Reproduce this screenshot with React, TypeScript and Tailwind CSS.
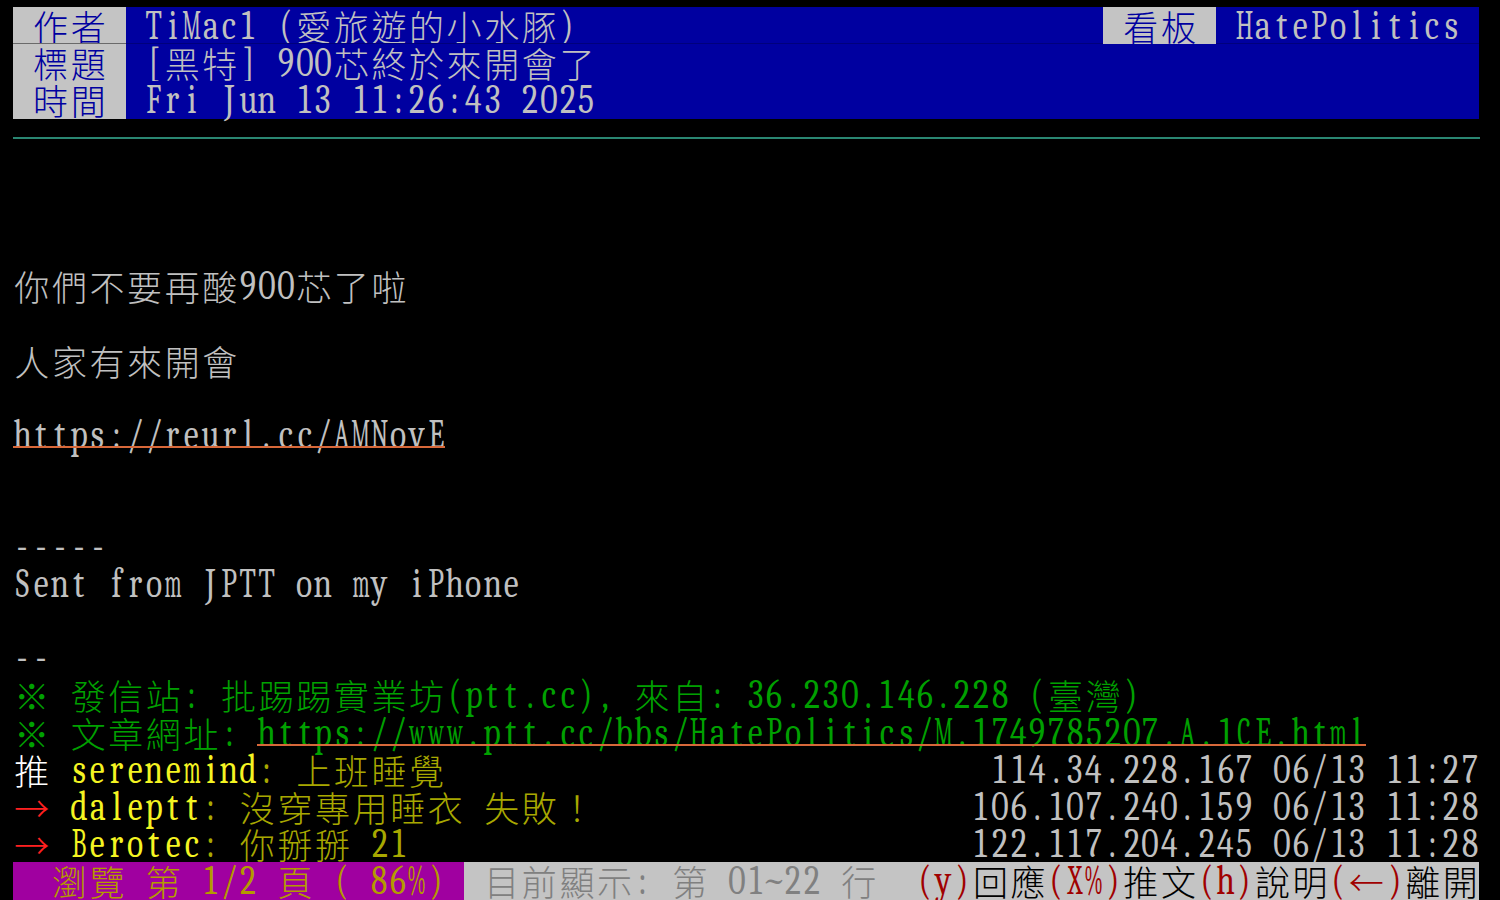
import React from "react";

type Seg = { t: string; fg?: string; bg?: string; u?: boolean; to?: number; line?: string };

// ANSI-ish palette of the terminal
const GRAY = "text-[#c0c0c0]";
const WHITE = "text-[#ffffff]";
const GREEN = "text-[#00a000]";
const YEL = "text-[#f4f422]";
const DYEL = "text-[#a8a800]";
const RED = "text-[#ff2020]";
const BLUE_BG = "bg-[#0000a0]";
const LABEL = "text-[#0000a0]";
const LABEL_BG = "bg-[#c4c4c4]";

const isWide = (c: string) => c.charCodeAt(0) > 0x2000;
const width = (s: string) => [...s].reduce((n, c) => n + (isWide(c) ? 2 : 1), 0);

const XWIDE = "mMWw%@";
const WIDE = "ABCDGHKNOQRUVXY&";
const MID = "EFLPSTZ";

function Cell({ c }: { c: string }) {
  if (c === " ") return <span className="w-[18.8px] shrink-0" />;
  if (isWide(c)) {
    return (
      <span className="w-[37.6px] shrink-0 flex justify-center font-['Noto_Sans_CJK_TC','Noto_Sans_CJK_JP',sans-serif] font-light text-[35px] leading-[37.2px]">
        {c}
      </span>
    );
  }
  const sc = XWIDE.includes(c)
    ? "scale-x-[0.5]"
    : WIDE.includes(c)
      ? "scale-x-[0.6]"
      : MID.includes(c)
        ? "scale-x-[0.7]"
        : "scale-x-[0.8]";
  return (
    <span className="w-[18.8px] shrink-0 flex justify-center">
      <span className={`inline-block font-serif text-[42px] leading-[37.2px] ${sc}`}>{c}</span>
    </span>
  );
}

function Segment({ s }: { s: Seg }) {
  return (
    <span className={`relative flex h-[37.2px] ${s.fg ?? GRAY} ${s.bg ?? ""}`}>
      {[...s.t].map((c, i) => (
        <Cell key={i} c={c} />
      ))}
      {s.u && <span className="absolute left-0 right-0 bottom-[5px] h-[2px] bg-[#d8683a]" />}
      {s.line && <span className={`absolute left-0 right-0 bottom-0 h-px ${s.line}`} />}
    </span>
  );
}

function Row({ segs }: { segs: Seg[] }) {
  let col = 0;
  const out = segs.map((s) => {
    let t = s.t;
    if (s.to) t += " ".repeat(Math.max(0, s.to - col - width(t)));
    col += width(t);
    return { ...s, t };
  });
  return (
    <div className="flex h-[37.2px]">
      {out.map((s, i) => (
        <Segment key={i} s={s} />
      ))}
    </div>
  );
}

const line = (t: string, fg = GRAY): Seg[] => [{ t, fg }];

const rows: (Seg[] | "sep")[] = [
  [
    { t: " 作者 ", fg: LABEL, bg: LABEL_BG, line: "bg-[#6a6a6a]" },
    { t: " TiMac1 (愛旅遊的小水豚)", bg: BLUE_BG, to: 58, line: "bg-[#00007c]" },
    { t: " 看板 ", fg: LABEL, bg: LABEL_BG },
    { t: " HatePolitics ", bg: BLUE_BG, to: 78, line: "bg-[#00007c]" },
  ],
  [
    { t: " 標題 ", fg: LABEL, bg: LABEL_BG },
    { t: " [黑特] 900芯終於來開會了", bg: BLUE_BG, to: 78 },
  ],
  [
    { t: " 時間 ", fg: LABEL, bg: LABEL_BG },
    { t: " Fri Jun 13 11:26:43 2025", bg: BLUE_BG, to: 78 },
  ],
  "sep",
  [],
  [],
  [],
  line("你們不要再酸900芯了啦"),
  [],
  line("人家有來開會"),
  [],
  [{ t: "https://reurl.cc/AMNovE", u: true }],
  [],
  [],
  line("-----"),
  line("Sent from JPTT on my iPhone"),
  [],
  line("--"),
  line("※ 發信站: 批踢踢實業坊(ptt.cc), 來自: 36.230.146.228 (臺灣)", GREEN),
  [
    { t: "※ 文章網址: ", fg: GREEN },
    { t: "https://www.ptt.cc/bbs/HatePolitics/M.1749785207.A.1CE.html", fg: GREEN, u: true },
  ],
  [
    { t: "推 ", fg: WHITE },
    { t: "serenemind", fg: YEL },
    { t: ": 上班睡覺", fg: DYEL, to: 52 },
    { t: "114.34.228.167 06/13 11:27" },
  ],
  [
    { t: "→ ", fg: RED },
    { t: "daleptt", fg: YEL },
    { t: ": 沒穿專用睡衣 失敗！", fg: DYEL, to: 51 },
    { t: "106.107.240.159 06/13 11:28" },
  ],
  [
    { t: "→ ", fg: RED },
    { t: "Berotec", fg: YEL },
    { t: ": 你掰掰 21", fg: DYEL, to: 51 },
    { t: "122.117.204.245 06/13 11:28" },
  ],
  [
    { t: "  瀏覽 第 1/2 頁 ( 86%) ", fg: "text-[#b49a00]", bg: "bg-[#a000a0]" },
    { t: " 目前顯示: 第 01~22 行", fg: "text-[#808080]", bg: "bg-[#c4c4c4]", to: 48 },
    { t: "(y)", fg: "text-[#a00000]", bg: "bg-[#c4c4c4]" },
    { t: "回應", fg: "text-black", bg: "bg-[#c4c4c4]" },
    { t: "(X%)", fg: "text-[#a00000]", bg: "bg-[#c4c4c4]" },
    { t: "推文", fg: "text-black", bg: "bg-[#c4c4c4]" },
    { t: "(h)", fg: "text-[#a00000]", bg: "bg-[#c4c4c4]" },
    { t: "說明", fg: "text-black", bg: "bg-[#c4c4c4]" },
    { t: "(←)", fg: "text-[#a00000]", bg: "bg-[#c4c4c4]" },
    { t: "離開", fg: "text-black", bg: "bg-[#c4c4c4]" },
  ],
];

export default function App() {
  return (
    <div className="h-[900px] w-[1500px] overflow-hidden bg-black pt-[7px] pl-[13px]">
      {rows.map((r, i) =>
        r === "sep" ? (
          <div key={i} className="h-[37.2px] pt-[18px]">
            <div className="h-[2px] w-[1467px] bg-[#2a8672]" />
          </div>
        ) : (
          <Row key={i} segs={r} />
        ),
      )}
    </div>
  );
}
